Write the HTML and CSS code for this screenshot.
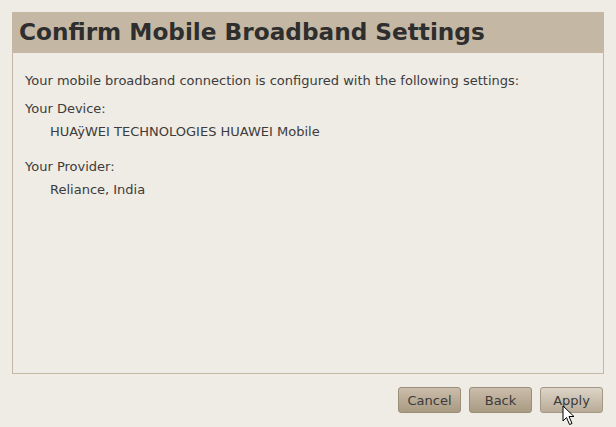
FILE: index.html
```html
<!DOCTYPE html>
<html>
<head>
<meta charset="utf-8">
<link rel="stylesheet" href="styles.css">
</head>
<body>
<div class="window">
  <div class="panel">
    <div class="header">Confirm Mobile Broadband Settings</div>
    <div class="content">
      <p class="intro">Your mobile broadband connection is configured with the following settings:</p>
      <div class="group">
        <div class="label">Your Device:</div>
        <div class="value">HUAÿWEI TECHNOLOGIES HUAWEI Mobile</div>
      </div>
      <div class="group">
        <div class="label">Your Provider:</div>
        <div class="value">Reliance, India</div>
      </div>
    </div>
  </div>
  <div class="buttons">
    <button class="btn">Cancel</button>
    <button class="btn">Back</button>
    <button class="btn hover">Apply
      <svg class="cursor" width="14" height="22" viewBox="0 0 14 22"><path d="M1 1 L1 16 L4.5 12.5 L7.5 19.5 L10 18.5 L7 11.5 L12 11.5 Z" fill="#fff" stroke="#000" stroke-width="1" stroke-linejoin="miter"/></svg>
    </button>
  </div>
</div>
</body>
</html>
```
FILE: styles.css
```css
html, body {
  margin: 0;
  padding: 0;
  background: #efebe5;
  width: 616px;
  height: 427px;
  overflow: hidden;
}
body {
  font-family: "DejaVu Sans", sans-serif;
  color: #3c3c3c;
}
.window {
  padding: 12px 12px 0 12px;
  display: flex;
  flex-direction: column;
}
.panel {
  width: 592px;
  height: 362px;
  box-sizing: border-box;
  border: 1px solid #c4b8a4;
  display: flex;
  flex-direction: column;
}
.header {
  background: #c4b8a4;
  height: 41px;
  margin: -1px -1px 0 -1px;
  box-sizing: border-box;
  padding: 4px 0 0 7px;
  font-weight: bold;
  font-size: 23.2px;
  line-height: 32px;
  color: #2e2e2e;
}
.content {
  padding: 20px 0 0 12px;
  font-size: 13px;
  color: #3c3c3c;
}
.intro {
  margin: 0 0 12px 0;
  line-height: 16px;
}
.group {
  margin-bottom: 19px;
}
.label {
  line-height: 16px;
  margin-bottom: 7px;
}
.value {
  line-height: 16px;
  padding-left: 25px;
}
.buttons {
  display: flex;
  justify-content: flex-end;
  gap: 8px;
  padding-top: 13px;
  padding-right: 1px;
}
.btn {
  position: relative;
  width: 63px;
  height: 26px;
  box-sizing: border-box;
  border: 1px solid #9a8d7a;
  border-radius: 3px;
  background: linear-gradient(#cbbdab, #a99a82);
  font-family: "DejaVu Sans", sans-serif;
  font-size: 13px;
  color: #3a3a3a;
  padding: 0;
}
.btn.hover {
  background: linear-gradient(#ddd5c8, #b8ab97);
  border-color: #a49784;
}
.cursor {
  position: absolute;
  left: 21px;
  top: 17px;
}
```
